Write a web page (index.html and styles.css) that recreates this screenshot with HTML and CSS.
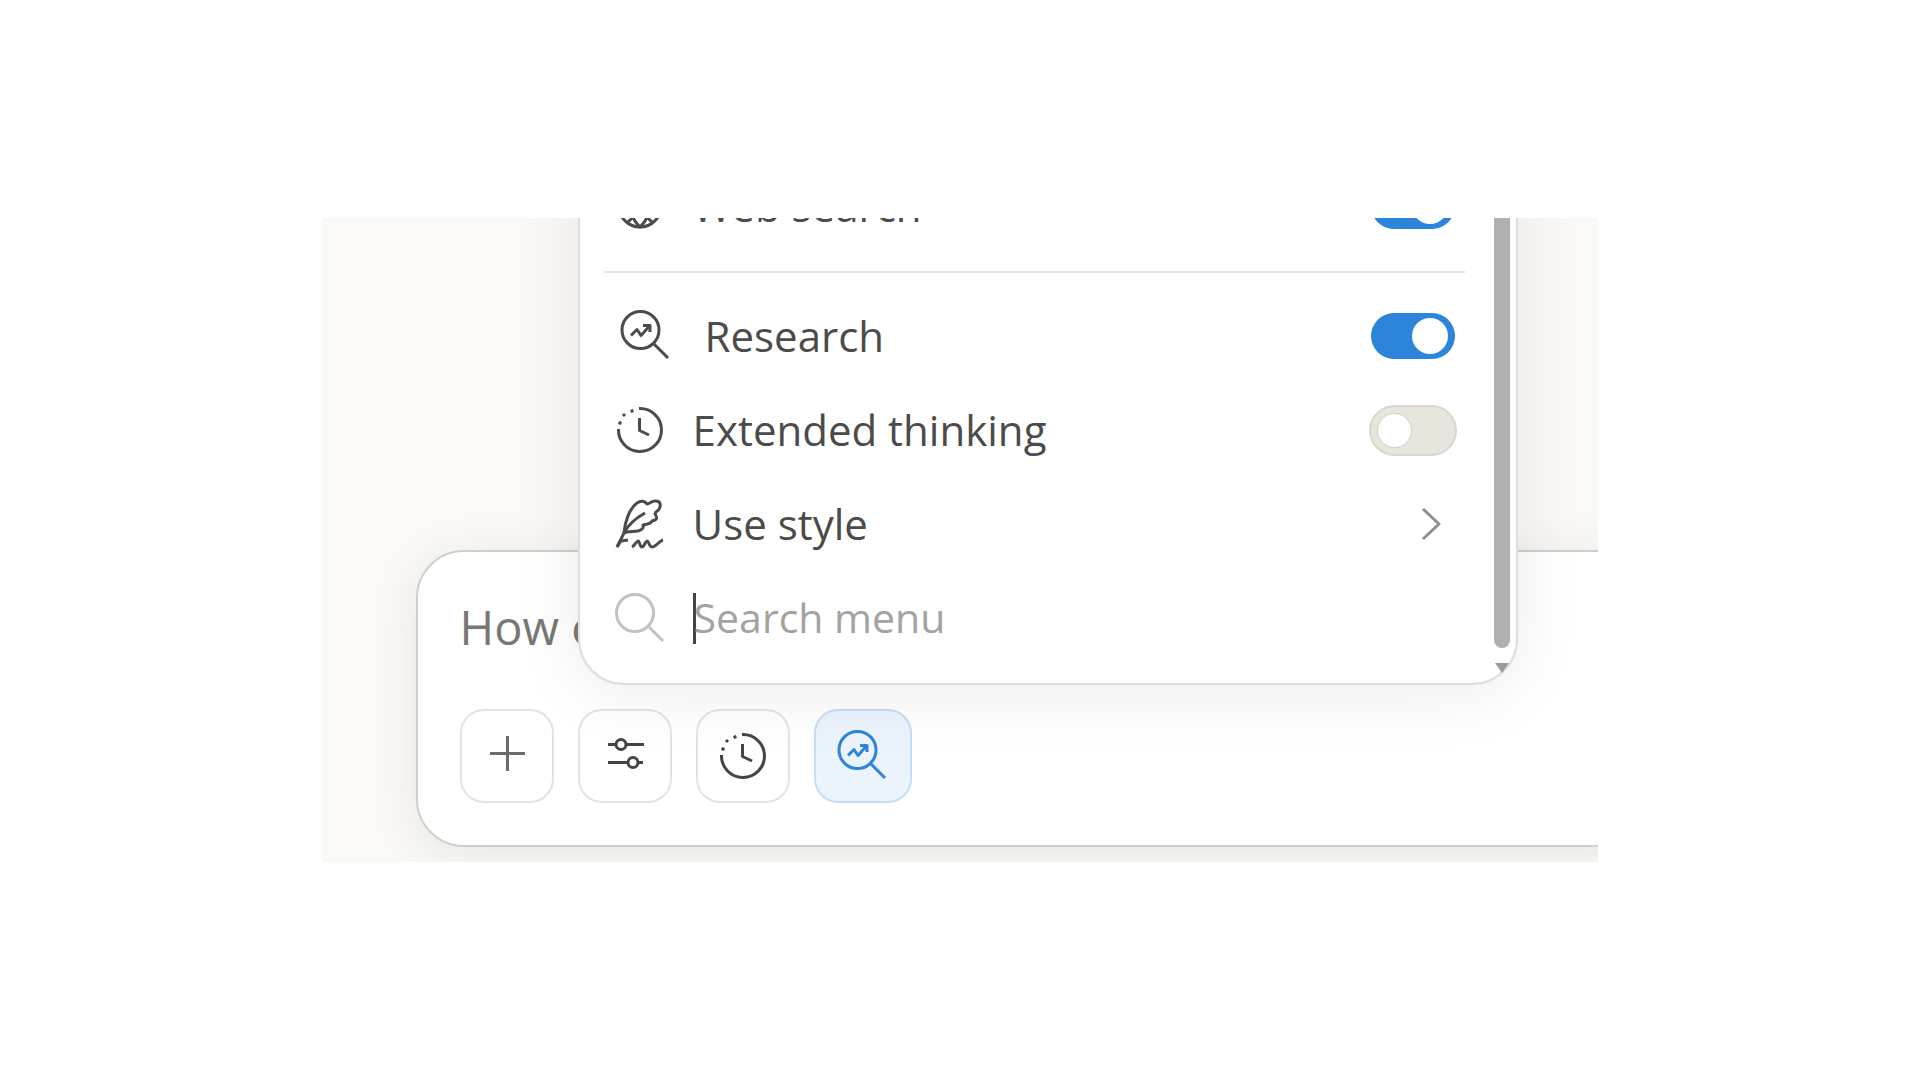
FILE: index.html
```html
<!DOCTYPE html>
<html lang="en">
  <head>
    <meta charset="UTF-8" />
    <meta name="viewport" content="width=device-width, initial-scale=1.0" />
    <title>Chat</title>
    <link rel="stylesheet" href="styles.css">
  </head>
  <body>
    <!-- shared icons -->
    <svg class="sprite" aria-hidden="true">
      <symbol id="research" viewBox="0 0 60 48" overflow="visible">
        <circle cx="24.500" cy="18" r="18.5" />
        <path d="M37.5 31.5L52 46" />
        <path d="M15 23.500L21 17.500L25 23.500L33 14.500" />
        <path d="M27 13.500H34V20" />
      </symbol>
      <symbol id="clock" viewBox="0 0 48 48" overflow="visible">
        <path d="M23 2.5A21.5 21.5 0 1 1 2.500 23" />
        <path d="M15.500 3.500L16.500 6.500M7 8L9 10M2.500 16.500L5.500 17.500" />
        <path d="M23.500 12V24.500L33 29" />
      </symbol>
    </svg>

    <main class="stage">
      <form class="composer">
        <input class="prompt" type="text" placeholder="How c" aria-label="How c" />
        <div class="tools">
          <button class="tool" type="button">
            <svg class="icon" viewBox="0 0 48 48"><path d="M24.500 4V39M7 21.500H42" /></svg>
          </button>
          <button class="tool dark" type="button">
            <svg class="icon" viewBox="0 0 48 48">
              <path d="M7 12.500H15M25 12.500H43M7 30.500H27M37 30.500H42" />
              <circle cx="20" cy="12.500" r="5" />
              <circle cx="32" cy="30.500" r="5" />
            </svg>
          </button>
          <button class="tool dark" type="button">
            <svg class="icon"><use href="#clock" /></svg>
          </button>
          <button class="tool active" type="button">
            <svg class="icon wide"><use href="#research" /></svg>
          </button>
        </div>
      </form>

      <div class="menu">
        <label class="row">
          <svg class="icon" viewBox="0 0 48 48">
            <circle cx="24" cy="24" r="21" />
            <path d="M24 3C12 12 9 30 24 45C39 30 36 12 24 3" />
            <path d="M7 12L37 41M41 12L11 41M3 24H45" />
          </svg>
          <span class="name">Web search</span>
          <input class="toggle" type="checkbox" checked />
        </label>
        <hr class="line" />
        <label class="row">
          <svg class="icon wide"><use href="#research" /></svg>
          <span class="name">Research</span>
          <input class="toggle" type="checkbox" checked />
        </label>
        <label class="row">
          <svg class="icon"><use href="#clock" /></svg>
          <span class="name">Extended thinking</span>
          <input class="toggle" type="checkbox" />
        </label>
        <button class="row" type="button">
          <svg class="icon" viewBox="0 0 48 48">
            <path d="M1 47L8 33C9 22 13 9 21 3C25 0 29 1 31 4C34 4 36 0 40 1C45 1 45 6 43 9C42 12 39 11 39 14C42 18 41 20 36 21C35 24 31 24 27 25C28 28 26 30 22 31C17 32 12 31 8 33" />
            <path d="M29 13C20 18 12 25 8 33M1 47L5 41L12 40" />
            <path d="M16 47C18 46 20 42 22 41C24 41 23 46 26 47C28 47 29 42 31 41C33 41 33 47 36 47C40 47 43 41 47 40" />
          </svg>
          <span class="name">Use style</span>
          <svg class="icon chevron" viewBox="0 0 48 48"><path d="M14 9L30 24L14 39" /></svg>
        </button>
        <label class="row search">
          <svg class="icon" viewBox="0 0 48 48">
            <circle cx="19" cy="19" r="18.500" />
            <path d="M33 33L47 47" />
          </svg>
          <span class="caret"></span>
          <input class="name" type="text" placeholder="Search menu" aria-label="Search menu" />
        </label>
        <div class="scrollbar">
          <div class="thumb"></div>
          <div class="arrow"></div>
        </div>
      </div>
    </main>
  </body>
</html>
```
FILE: styles.css
```css
* {
  box-sizing: border-box;
  margin: 0;
  padding: 0;
}

body {
  min-height: 100vh;
  display: flex;
  align-items: center;
  justify-content: center;
  background-color: #fff;
  font-family: "Open Sans", sans-serif;
  font-size: 42px;
  color: #4b4b49;
}

button,
input {
  border: none;
  outline: none;
  background: none;
  font: inherit;
  color: inherit;
}

.sprite {
  position: absolute;
  width: 0;
  height: 0;
}

.stage {
  position: relative;
  width: 66.5%;
  padding: 332px 0 15px 94px;
  background-color: #faf9f5;
  overflow: hidden;
}

/* message box, runs off the right edge */
.composer {
  margin-right: -60px;
  padding: 43px 42px 42px;
  border: 2px solid #cfcfcc;
  border-radius: 48px;
  background-color: #fff;
  box-shadow: 0 8px 50px rgba(0, 0, 0, 0.08);
}

.prompt {
  display: block;
  width: 100%;
  height: 64px;
  font-size: 47px;
}

.prompt::placeholder {
  color: #777773;
  opacity: 1;
}

.tools {
  display: flex;
  gap: 24px;
  margin-top: 50px;
}

.tool {
  display: flex;
  align-items: center;
  justify-content: center;
  width: 94px;
  height: 94px;
  border: 2px solid #e3e3e1;
  border-radius: 24px;
  background-color: #fff;
  color: #6b6b69;
}

.dark {
  color: #444442;
}

.active {
  width: 98px;
  border-color: #c5ddf6;
  background-color: #ebf4fc;
  color: #2c84db;
}

.icon {
  flex: none;
  width: 48px;
  height: 48px;
  fill: none;
  stroke: currentColor;
  stroke-width: 3;
  stroke-linejoin: round;
  overflow: visible;
}

.wide {
  width: 60px;
}

/* dropdown */
.menu {
  position: absolute;
  left: 256px;
  right: 80px;
  bottom: 177px;
  padding: 20px 51px 18px 24px;
  border: 2px solid #dededc;
  border-radius: 46px;
  background-color: #fff;
  box-shadow: 0 8px 70px rgba(0, 0, 0, 0.08);
}

.row {
  display: flex;
  align-items: center;
  gap: 29px;
  width: 100%;
  height: 94px;
  padding: 0 8px 0 12px;
}

.name {
  flex: 1;
  min-width: 0;
  padding-bottom: 2px;
  text-align: left;
}

.line {
  height: 2px;
  margin: 18px 0 16px;
  border: none;
  background-color: #e4e4e2;
}

.toggle {
  appearance: none;
  display: flex;
  align-items: center;
  width: 88px;
  height: 51px;
  padding: 0 7px;
  border: 2px solid #d8d7d0;
  border-radius: 26px;
  background-color: #e8e6dc;
}

.toggle::before {
  content: "";
  width: 33px;
  height: 33px;
  border-radius: 50%;
  background-color: #fff;
  box-shadow: 0 0 0 1px #d3d2cc;
}

.toggle:checked {
  justify-content: flex-end;
  width: 84px;
  height: 46px;
  margin-right: 2px;
  border: none;
  background-color: #2c84db;
}

.toggle:checked::before {
  width: 36px;
  height: 36px;
  box-shadow: none;
}

.chevron {
  color: #8f8f8c;
}

.search .icon {
  color: #c2c2bf;
}

.search .name {
  font-size: 41px;
}

.search .name::placeholder {
  color: #a3a3a0;
  opacity: 1;
}

.caret {
  width: 3px;
  height: 51px;
  margin-right: -31px;
  background-color: #444;
}

.scrollbar {
  position: absolute;
  top: 0;
  right: 6px;
  bottom: 10px;
  display: flex;
  flex-direction: column;
  align-items: center;
  gap: 15px;
}

.thumb {
  flex: 1;
  width: 16px;
  border-radius: 8px;
  background-color: #b0b0b0;
}

.arrow {
  border: 7px solid transparent;
  border-top: 10px solid #9b9b9b;
  border-bottom: none;
}
```
